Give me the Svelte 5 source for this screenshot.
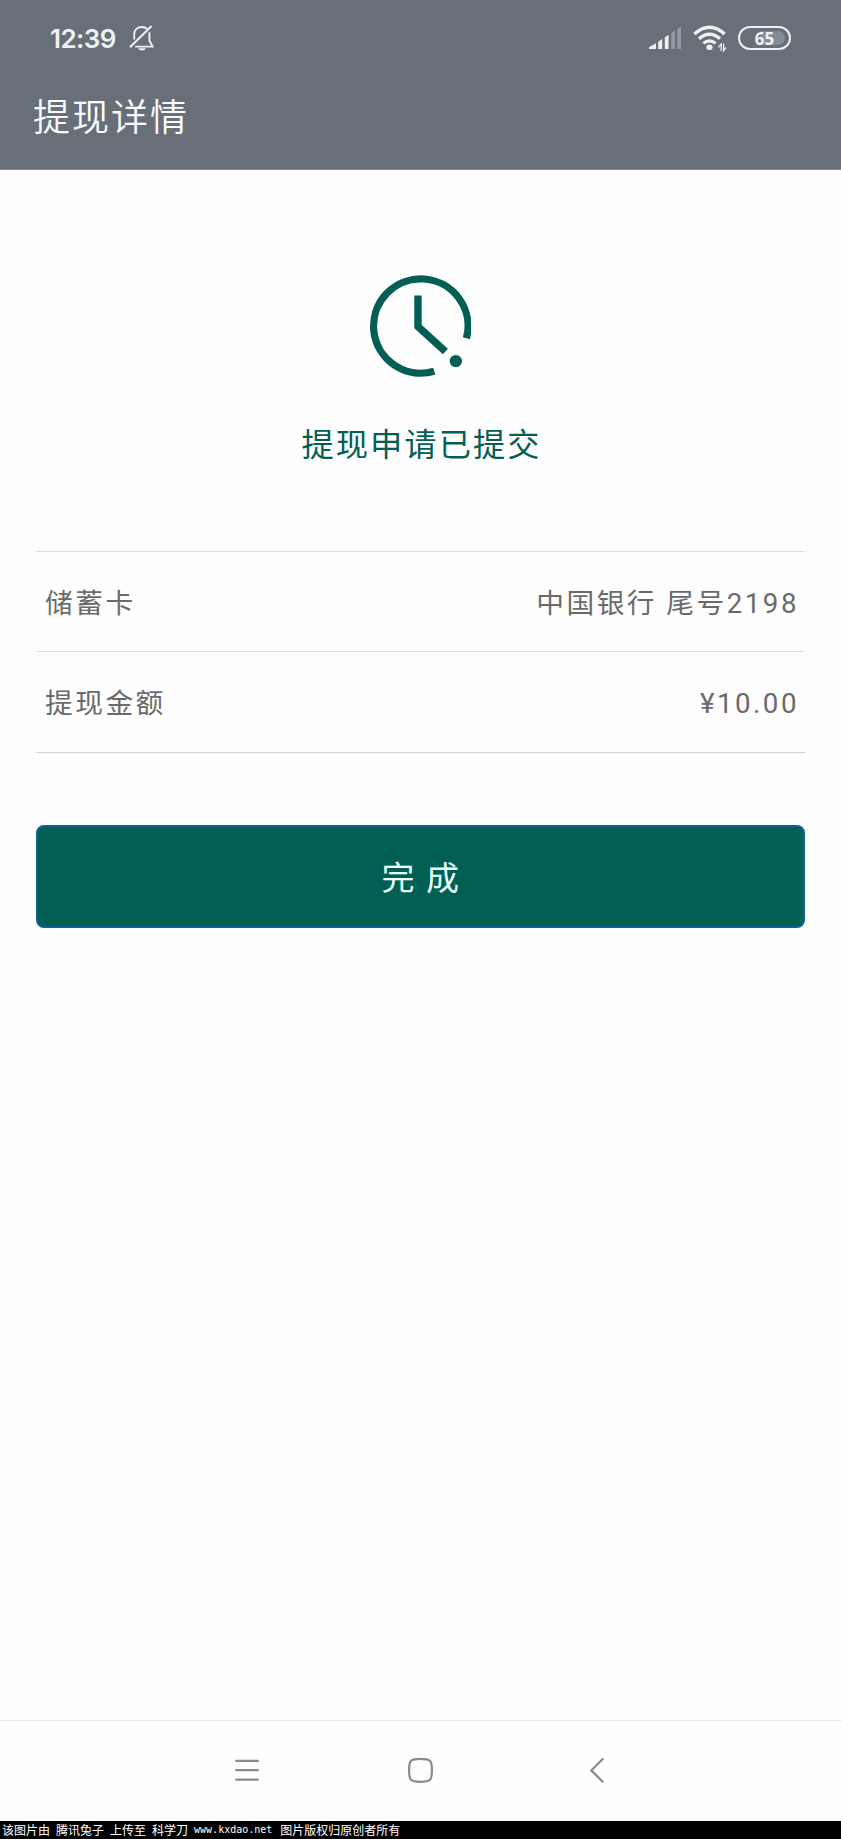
<script>
  const rows = [
    { label: '储蓄卡', value: '中国银行 尾号2198' },
    { label: '提现金额', value: '¥10.00' }
  ];
  const credits = ['该图片由', '腾讯兔子', '上传至', '科学刀'];
</script>

<div class="screen">
  <header>
    <div class="status">
      <div class="left">
        <span class="time">12:39</span>
        <svg width="26" height="28" viewBox="0 0 26 28" fill="none" stroke="#edf0f4" stroke-width="1.9">
          <path d="M5.2 15.5V10.2C5.2 5.5 8.5 3 12.8 3C15 3 16.8 3.7 18.2 5M20.4 8.2V16.5L23.6 22.6H6.2" />
          <path d="M1 23.2L22.6 2" stroke-width="2.1" />
          <path d="M9 24.2H17C16 26 14.7 26.4 13 26.4S10 26 9 24.2Z" fill="#edf0f4" stroke="none" />
        </svg>
      </div>
      <div class="right">
        <svg width="33" height="26" viewBox="0 0 33 26">
          <g fill="#edf0f4">
            <path d="M0 24V22.2L7 18.3V24Z" />
            <path d="M9.2 24V17.2Q9.2 16.6 9.8 16.2L13.2 14V24Z" />
            <path d="M15.8 24V13Q15.8 12.3 16.4 11.9L19.6 9.8V24Z" />
          </g>
          <g fill="#939aa3">
            <path d="M22.2 24V9Q22.2 8.2 22.8 7.8L26 5.4V24Z" />
            <path d="M28.4 24V4.5Q28.4 3.8 29 3.4L32 1.2V24Z" />
          </g>
        </svg>
        <svg class="wifi" width="34" height="28" viewBox="0 0 34 28" fill="none" stroke="#edf0f4">
          <path d="M1.4 9.1Q16.5 -4.5 31.6 9.1" stroke-width="3.4" />
          <path d="M6 13.8Q16.5 4.7 27 13.8" stroke-width="3.2" />
          <path d="M10.4 18.4Q16.5 13.2 22.6 18.4" stroke-width="3.2" />
          <ellipse cx="16.5" cy="22.2" rx="3.1" ry="2.8" fill="#edf0f4" stroke="none" />
          <path d="M28.2 26V19L25.4 22.3M30.6 18.6V25.6L33 22.5" stroke-width="1.3" />
        </svg>
        <div class="battery"><i></i><span>65</span></div>
      </div>
    </div>
    <h1>提现详情</h1>
  </header>

  <main>
    <svg class="clock" width="102" height="102" viewBox="0 0 102 102" fill="none" stroke="#035f54">
      <path d="M97.4 63.2A47.2 47.2 0 1 0 65.2 96.3" stroke-width="7.2" />
      <path d="M49 20.4V51.6L76.4 76.4" stroke-width="7.4" />
      <circle cx="86.8" cy="86.1" r="6.2" fill="#035f54" stroke="none" />
    </svg>
    <p class="state">提现申请已提交</p>
    <dl>
      {#each rows as row}
        <div class="row"><dt>{row.label}</dt><dd>{row.value}</dd></div>
      {/each}
    </dl>
    <button>完 成</button>
  </main>

  <nav>
    <svg width="26" height="26" viewBox="0 0 26 26" fill="none" stroke="#8b8b8b" stroke-width="2.3" stroke-linecap="round">
      <path d="M2.2 3.9H23.8M2.2 13.2H23.8M2.2 22.6H23.8" />
    </svg>
    <svg width="26" height="26" viewBox="0 0 26 26" fill="none" stroke="#8b8b8b" stroke-width="2.2">
      <path d="M12.5 1.8C22.5 1.8 23.9 3 23.9 13.2S22.5 24.8 12.5 24.8 1.1 23.4 1.1 13.2 2.5 1.8 12.5 1.8Z" />
    </svg>
    <svg width="16" height="26" viewBox="0 0 16 26" fill="none" stroke="#8b8b8b" stroke-width="2.2" stroke-linecap="round">
      <path d="M13.7 2L2.3 13.4L13.7 24.7" />
    </svg>
  </nav>

  <footer>
    {#each credits as part}<span>{part}</span>{/each}
    <span class="url">www.kxdao.net</span>
    <span>图片版权归原创者所有</span>
  </footer>
</div>

<style>
  :global(body) { background: #fefefe; }
  .screen {
    width: 841px;
    height: 1839px;
    display: flex;
    flex-direction: column;
    background: #fefefe;
    font-family: Roboto, "Noto Sans CJK SC", sans-serif;
    overflow: hidden;
  }
  header {
    height: 170px;
    box-sizing: border-box;
    background: #696f79;
    border-bottom: 1px solid #8d8993;
    color: #f9fcff;
  }
  .status {
    height: 80px;
    display: flex;
    justify-content: space-between;
    padding: 0 50px;
    color: #edf0f4;
  }
  .left, .right { display: flex; align-items: flex-start; }
  .left svg { margin: 24px 0 0 12px; }
  .time {
    width: 67px;
    font: 600 26px/30px Inter, sans-serif;
    letter-spacing: -0.6px;
    margin-top: 24px;
    white-space: nowrap;
  }
  .right > svg { margin-top: 25px; }
  .right > .wifi { margin: 25px 11px 0 11px; }
  .battery {
    position: relative;
    box-sizing: border-box;
    width: 53px;
    height: 24px;
    margin-top: 26px;
    border: 2px solid #edf0f4;
    border-radius: 12px;
    display: flex;
    justify-content: center;
  }
  .battery i {
    position: absolute;
    left: 3px;
    top: 3px;
    width: 42px;
    height: 14px;
    border-radius: 7px;
    background: linear-gradient(90deg, transparent 40%, #858b94 40%);
  }
  .battery span { position: relative; font: 700 17px/21px "Noto Sans", sans-serif; }
  h1 {
    margin: 0;
    padding-left: 33px;
    font-size: 37px;
    line-height: 78px;
    letter-spacing: 2px;
    font-weight: 350;
  }
  main {
    flex: 1;
    display: flex;
    flex-direction: column;
    padding: 105px 36px 0;
  }
  .clock { align-self: center; margin-right: 2px; }
  .state {
    margin: 44px 0 0;
    padding-left: 2px;
    text-align: center;
    color: #035f54;
    font-size: 32.3px;
    line-height: 48px;
    letter-spacing: 2px;
  }
  dl { margin: 82px 0 0; border-top: 1px solid #dedede; }
  .row {
    height: 99px;
    display: flex;
    justify-content: space-between;
    padding: 0 6px 0 9px;
    border-bottom: 1px solid #dedede;
    color: #6a6a6a;
    font-size: 27.7px;
    line-height: 103px;
    letter-spacing: 2.5px;
  }
  .row:last-child { height: 100px; border-color: #d0d0d0; }
  dd { margin: 0; }
  button {
    margin-top: 72px;
    height: 103px;
    border: 2px solid #0d609a;
    border-radius: 8px;
    background: #015f54;
    color: #e8fffb;
    font: 33px/99px Roboto, "Noto Sans CJK SC", sans-serif;
    letter-spacing: 1.6px;
    padding: 2px 0 0 1px;
  }
  nav {
    height: 98px;
    padding: 0 236px 2px 234px;
    border-top: 1px solid #e8e8e8;
    display: grid;
    grid-template-columns: 174px 1fr auto;
    align-items: center;
  }
  footer {
    height: 18px;
    background: #000;
    color: #fff;
    display: flex;
    gap: 6px;
    padding-left: 2px;
    font: 12px/17px "Noto Sans CJK SC", sans-serif;
    white-space: nowrap;
  }
  .url { font: 10px/17px "DejaVu Sans Mono", monospace; margin-right: 2px; }
</style>
